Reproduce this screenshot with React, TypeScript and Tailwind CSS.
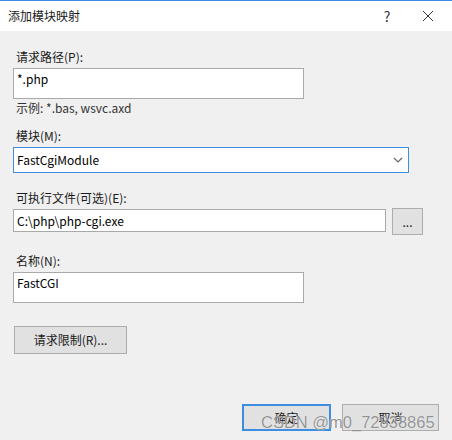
import React from 'react'

const font = "font-['Noto_Sans_CJK_SC','Noto_Sans',sans-serif]"

const Label = ({ children }: { children: React.ReactNode }) => (
    <div className="text-[12px] leading-[16px] text-[#1a1a1a] pl-[3px]">{children}</div>
)

const TextBox = ({ value, className }: { value: string; className: string }) => (
    <div className={`bg-white border border-[#a9a9a9] text-[12px] leading-[16px] px-[3px] pt-[2px] ${className}`}>
        {value}
    </div>
)

const Button = ({ label, className }: { label: string; className: string }) => (
    <div className={`flex items-center justify-center bg-[#e1e1e1] border text-[12px] text-[#1a1a1a] ${className}`}>
        {label}
    </div>
)

const App = (): JSX.Element => {
    return (
        <div className={`relative w-[452px] h-[440px] bg-[#f0f0f0] ${font} overflow-hidden`}>
            {/* title bar */}
            <div className="flex items-center h-[31px] bg-white border-t border-[#3d8ee2]">
                <div className="pl-[8px] text-[12px] text-[#1a1a1a] grow">添加模块映射</div>
                <div className="w-[20px] text-center text-[14px] text-[#333] mr-[25px]">?</div>
                <svg width="12" height="12" viewBox="0 0 12 12" className="mr-[18px]">
                    <path d="M1 1 L11 11 M11 1 L1 11" stroke="#333" strokeWidth="1" />
                </svg>
            </div>

            <div className="flex flex-col pl-[13px] pt-[18px]">
                <Label>请求路径(P):</Label>
                <TextBox value="*.php" className="w-[291px] h-[31px] mt-[3px]" />
                <div className="text-[12px] leading-[16px] text-[#333] pl-[3px] mt-[1px]">示例: *.bas, wsvc.axd</div>

                <div className="mt-[12px]"><Label>模块(M):</Label></div>
                <div className="flex items-center justify-between w-[396px] h-[26px] mt-[3px] bg-white border border-[#3d8ee2] text-[12px] px-[3px]">
                    <span>FastCgiModule</span>
                    <svg width="10" height="6" viewBox="0 0 10 6" className="mr-[2px]">
                        <path d="M1 1 L5 5 L9 1" stroke="#666" strokeWidth="1.2" fill="none" />
                    </svg>
                </div>

                <div className="mt-[17px]"><Label>可执行文件(可选)(E):</Label></div>
                <div className="flex items-start mt-[3px]">
                    <div className="flex items-center w-[373px] h-[23px] bg-white border border-[#a9a9a9] text-[12px] px-[3px]">
                        C:\php\php-cgi.exe
                    </div>
                    <Button label="..." className="w-[31px] h-[27px] ml-[6px] -mt-[1px] border-[#adadad] text-[10px]" />
                </div>

                <div className="mt-[18px]"><Label>名称(N):</Label></div>
                <TextBox value="FastCGI" className="w-[291px] h-[31px] mt-[3px]" />

                <Button label="请求限制(R)..." className="w-[113px] h-[28px] mt-[23px] ml-[1px] border-[#adadad]" />
            </div>

            <div className="absolute left-[242px] top-[404px] flex gap-[11px]">
                <Button label="确定" className="w-[89px] h-[27px] border-2 border-[#3d8ee2]" />
                <Button label="取消" className="w-[97px] h-[27px] border-[#adadad]" />
            </div>

            {/* watermark */}
            <div className="absolute left-[261px] top-[410px] text-[16.5px] font-['Liberation_Sans',sans-serif] text-[#808080]/85 [text-shadow:0_0_1px_#fff]">
                CSDN @m0_72838865
            </div>
        </div>
    )
}

export default App
